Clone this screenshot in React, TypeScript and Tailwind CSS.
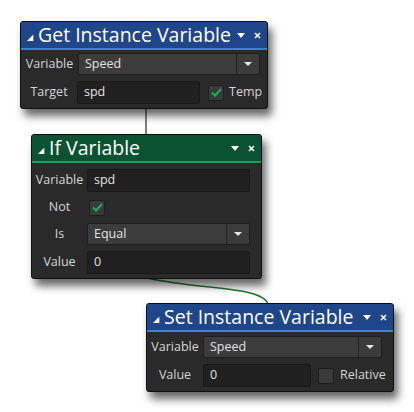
import React from "react";

type NodeProps = {
  title: string;
  color: "blue" | "green";
  x: number;
  y: number;
  w: number;
  children: React.ReactNode;
};

const headerStyles = {
  blue: { bar: "bg-[#1f4688]", line: "bg-[#3a80dc]" },
  green: { bar: "bg-[#0b5232]", line: "bg-[#16a05c]" },
};

const Node = ({ title, color, x, y, w, children }: NodeProps) => {
  const s = headerStyles[color];
  return (
    <div
      className="absolute rounded-[3px] border border-[#101010] bg-[#2a2a2a] shadow-[4px_7px_8px_rgba(0,0,0,0.6)] overflow-hidden"
      style={{ left: x, top: y, width: w }}
    >
      <div className={`${s.bar} h-[26px] flex items-center pl-[6px] pr-[6px] text-white`}>
        <span className="text-[8px] leading-none mt-[3px] mr-[5px]">◢</span>
        <span className="text-[19.5px] leading-none flex-1 whitespace-nowrap">{title}</span>
        <svg width="8" height="5" viewBox="0 0 8 5" className="mr-[9px] mt-[1px]">
          <path d="M0 0h8L4 5z" fill="#fff" />
        </svg>
        <svg width="7" height="7" viewBox="0 0 7 7" className="mt-[1px]">
          <path d="M1 1l5 5M6 1L1 6" stroke="#fff" strokeWidth="1.6" />
        </svg>
      </div>
      <div className={`${s.line} h-[2px]`} />
      {children}
    </div>
  );
};

const Label = ({ w, text }: { w: number; text: string }) => (
  <div className="text-center text-[12.5px] text-[#d6d6d6] shrink-0" style={{ width: w }}>
    {text}
  </div>
);

const Input = ({ w, value }: { w: number; value: string }) => (
  <div
    className="h-[23px] rounded-[2px] border border-[#1a1a1a] bg-[#202020] flex items-center pl-[6px] text-[12.5px] text-[#e2e2e2]"
    style={{ width: w }}
  >
    {value}
  </div>
);

const Dropdown = ({ w, value }: { w: number; value: string }) => (
  <div
    className="h-[22px] rounded-[2px] border border-[#1e1e1e] bg-[#3c3c3c] flex items-center text-[12.5px] text-[#e2e2e2]"
    style={{ width: w }}
  >
    <span className="flex-1 pl-[6px]">{value}</span>
    <div className="w-[23px] h-full border-l border-[#222] flex items-center justify-center">
      <svg width="8" height="4" viewBox="0 0 8 4">
        <path d="M0 0h8L4 4z" fill="#e8e8e8" />
      </svg>
    </div>
  </div>
);

const Check = ({ on }: { on?: boolean }) => (
  <div className="w-[16px] h-[16px] rounded-[2px] border border-[#1e1e1e] bg-[#3a3a3a] flex items-center justify-center shrink-0">
    {on && (
      <svg width="11" height="9" viewBox="0 0 11 9">
        <path d="M1 4.5l3 3L10 1" stroke="#1ea95b" strokeWidth="2.2" fill="none" />
      </svg>
    )}
  </div>
);

export default function App() {
  const font = { fontFamily: '"Open Sans", "Noto Sans", sans-serif' };
  return (
    <div className="relative w-[414px] h-[412px] bg-white overflow-hidden" style={font}>
      <svg className="absolute left-0 top-0" width="414" height="412">
        <line x1="146" y1="106" x2="146" y2="136" stroke="#808080" strokeWidth="2" />
        <path d="M147 278 C 200 290, 262 286, 268 304" stroke="#1d7a2c" strokeWidth="1.4" fill="none" />
      </svg>

      <Node title="Get Instance Variable" color="blue" x={20} y={21} w={248}>
        <div className="flex flex-col pt-[3px] pb-[4px]">
          <div className="flex items-center">
            <Label w={57} text="Variable" />
            <Dropdown w={182} value="Speed" />
          </div>
          <div className="flex items-center mt-[6px]">
            <Label w={56} text="Target" />
            <Input w={123} value="spd" />
            <div className="ml-[8px]">
              <Check on />
            </div>
            <span className="ml-[5px] text-[12.5px] text-[#d6d6d6]">Temp</span>
          </div>
        </div>
      </Node>

      <Node title="If Variable" color="green" x={31} y={134} w={231}>
        <div className="flex flex-col pt-[6px] pb-[4px]">
          <div className="flex items-center">
            <Label w={55} text="Variable" />
            <Input w={163} value="spd" />
          </div>
          <div className="flex items-center mt-[7px] h-[17px]">
            <Label w={55} text="Not" />
            <div className="ml-[2px]">
              <Check on />
            </div>
          </div>
          <div className="flex items-center mt-[7px]">
            <Label w={55} text="Is" />
            <Dropdown w={163} value="Equal" />
          </div>
          <div className="flex items-center mt-[6px]">
            <Label w={55} text="Value" />
            <Input w={163} value="0" />
          </div>
        </div>
      </Node>

      <Node title="Set Instance Variable" color="blue" x={146} y={303} w={248}>
        <div className="flex flex-col pt-[4px] pb-[4px]">
          <div className="flex items-center">
            <Label w={56} text="Variable" />
            <Dropdown w={179} value="Speed" />
          </div>
          <div className="flex items-center mt-[6px]">
            <Label w={56} text="Value" />
            <Input w={108} value="0" />
            <div className="ml-[7px]">
              <Check />
            </div>
            <span className="ml-[6px] text-[12.5px] text-[#d6d6d6]">Relative</span>
          </div>
        </div>
      </Node>
    </div>
  );
}
